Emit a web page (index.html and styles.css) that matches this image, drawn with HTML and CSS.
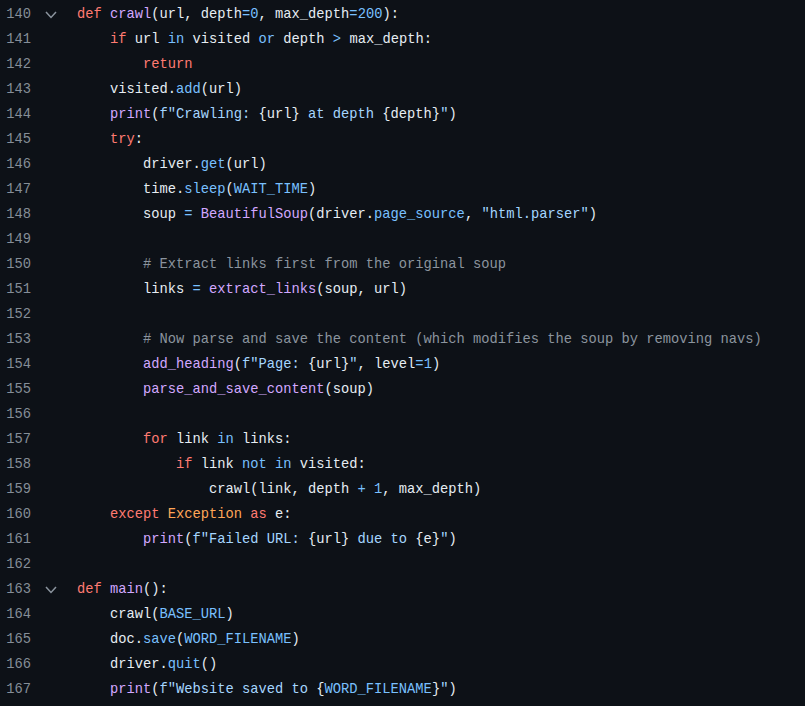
FILE: index.html
```html
<!DOCTYPE html>
<html lang="en">
<head>
<meta charset="utf-8">
<title>crawler.py</title>
<link rel="stylesheet" href="styles.css">
</head>
<body>
<div class="code-view">
  <div class="row"><span class="ln">140</span><span class="fold"><svg viewBox="0 0 12 8" width="12" height="8"><path d="M1 1 L6 6.5 L11 1" fill="none" stroke="#8b949e" stroke-width="1.5"/></svg></span><span class="code"><span class="k">def</span> <span class="f">crawl</span>(url, depth<span class="o">=</span><span class="n">0</span>, max_depth<span class="o">=</span><span class="n">200</span>):</span></div>
  <div class="row"><span class="ln">141</span><span class="fold"></span><span class="code">    <span class="k">if</span> url <span class="o">in</span> visited <span class="o">or</span> depth <span class="o">&gt;</span> max_depth:</span></div>
  <div class="row"><span class="ln">142</span><span class="fold"></span><span class="code">        <span class="k">return</span></span></div>
  <div class="row"><span class="ln">143</span><span class="fold"></span><span class="code">    visited.<span class="p">add</span>(url)</span></div>
  <div class="row"><span class="ln">144</span><span class="fold"></span><span class="code">    <span class="f">print</span>(<span class="s">f"Crawling: </span>{url}<span class="s"> at depth </span>{depth}<span class="s">"</span>)</span></div>
  <div class="row"><span class="ln">145</span><span class="fold"></span><span class="code">    <span class="k">try</span>:</span></div>
  <div class="row"><span class="ln">146</span><span class="fold"></span><span class="code">        driver.<span class="p">get</span>(url)</span></div>
  <div class="row"><span class="ln">147</span><span class="fold"></span><span class="code">        time.<span class="p">sleep</span>(<span class="c">WAIT_TIME</span>)</span></div>
  <div class="row"><span class="ln">148</span><span class="fold"></span><span class="code">        soup <span class="o">=</span> <span class="f">BeautifulSoup</span>(driver.<span class="p">page_source</span>, <span class="s">"html.parser"</span>)</span></div>
  <div class="row"><span class="ln">149</span><span class="fold"></span><span class="code"></span></div>
  <div class="row"><span class="ln">150</span><span class="fold"></span><span class="code">        <span class="cm"># Extract links first from the original soup</span></span></div>
  <div class="row"><span class="ln">151</span><span class="fold"></span><span class="code">        links <span class="o">=</span> <span class="f">extract_links</span>(soup, url)</span></div>
  <div class="row"><span class="ln">152</span><span class="fold"></span><span class="code"></span></div>
  <div class="row"><span class="ln">153</span><span class="fold"></span><span class="code">        <span class="cm"># Now parse and save the content (which modifies the soup by removing navs)</span></span></div>
  <div class="row"><span class="ln">154</span><span class="fold"></span><span class="code">        <span class="f">add_heading</span>(<span class="s">f"Page: </span>{url}<span class="s">"</span>, level<span class="o">=</span><span class="n">1</span>)</span></div>
  <div class="row"><span class="ln">155</span><span class="fold"></span><span class="code">        <span class="f">parse_and_save_content</span>(soup)</span></div>
  <div class="row"><span class="ln">156</span><span class="fold"></span><span class="code"></span></div>
  <div class="row"><span class="ln">157</span><span class="fold"></span><span class="code">        <span class="k">for</span> link <span class="o">in</span> links:</span></div>
  <div class="row"><span class="ln">158</span><span class="fold"></span><span class="code">            <span class="k">if</span> link <span class="o">not</span> <span class="o">in</span> visited:</span></div>
  <div class="row"><span class="ln">159</span><span class="fold"></span><span class="code">                crawl(link, depth <span class="o">+</span> <span class="n">1</span>, max_depth)</span></div>
  <div class="row"><span class="ln">160</span><span class="fold"></span><span class="code">    <span class="k">except</span> <span class="cl">Exception</span> <span class="k">as</span> e:</span></div>
  <div class="row"><span class="ln">161</span><span class="fold"></span><span class="code">        <span class="f">print</span>(<span class="s">f"Failed URL: </span>{url}<span class="s"> due to </span>{e}<span class="s">"</span>)</span></div>
  <div class="row"><span class="ln">162</span><span class="fold"></span><span class="code"></span></div>
  <div class="row"><span class="ln">163</span><span class="fold"><svg viewBox="0 0 12 8" width="12" height="8"><path d="M1 1 L6 6.5 L11 1" fill="none" stroke="#8b949e" stroke-width="1.5"/></svg></span><span class="code"><span class="k">def</span> <span class="f">main</span>():</span></div>
  <div class="row"><span class="ln">164</span><span class="fold"></span><span class="code">    crawl(<span class="c">BASE_URL</span>)</span></div>
  <div class="row"><span class="ln">165</span><span class="fold"></span><span class="code">    doc.<span class="p">save</span>(<span class="c">WORD_FILENAME</span>)</span></div>
  <div class="row"><span class="ln">166</span><span class="fold"></span><span class="code">    driver.<span class="p">quit</span>()</span></div>
  <div class="row"><span class="ln">167</span><span class="fold"></span><span class="code">    <span class="f">print</span>(<span class="s">f"Website saved to </span>{<span class="c">WORD_FILENAME</span>}<span class="s">"</span>)</span></div>
</div>
</body>
</html>
```

FILE: styles.css
```css
html, body {
  margin: 0;
  padding: 0;
  background: #0d1117;
}

.code-view {
  display: flex;
  flex-direction: column;
  padding-top: 2px;
  font-family: "Liberation Mono", "DejaVu Sans Mono", monospace;
  font-size: 13.75px;
  color: #e6edf3;
}

.row {
  display: flex;
  align-items: center;
  height: 25px;
}

.ln {
  width: 31px;
  flex: none;
  text-align: right;
  color: #858e98;
}

.fold {
  width: 46px;
  flex: none;
  display: flex;
  align-items: center;
  padding-left: 14px;
  box-sizing: border-box;
}

.fold svg {
  display: block;
}

.code {
  white-space: pre;
}

.k { color: #ff7b72; }
.o { color: #79c0ff; }
.n { color: #79c0ff; }
.c { color: #79c0ff; }
.p { color: #79c0ff; }
.f { color: #d2a8ff; }
.s { color: #a5d6ff; }
.cm { color: #8b949e; }
.cl { color: #ffa657; }
```
